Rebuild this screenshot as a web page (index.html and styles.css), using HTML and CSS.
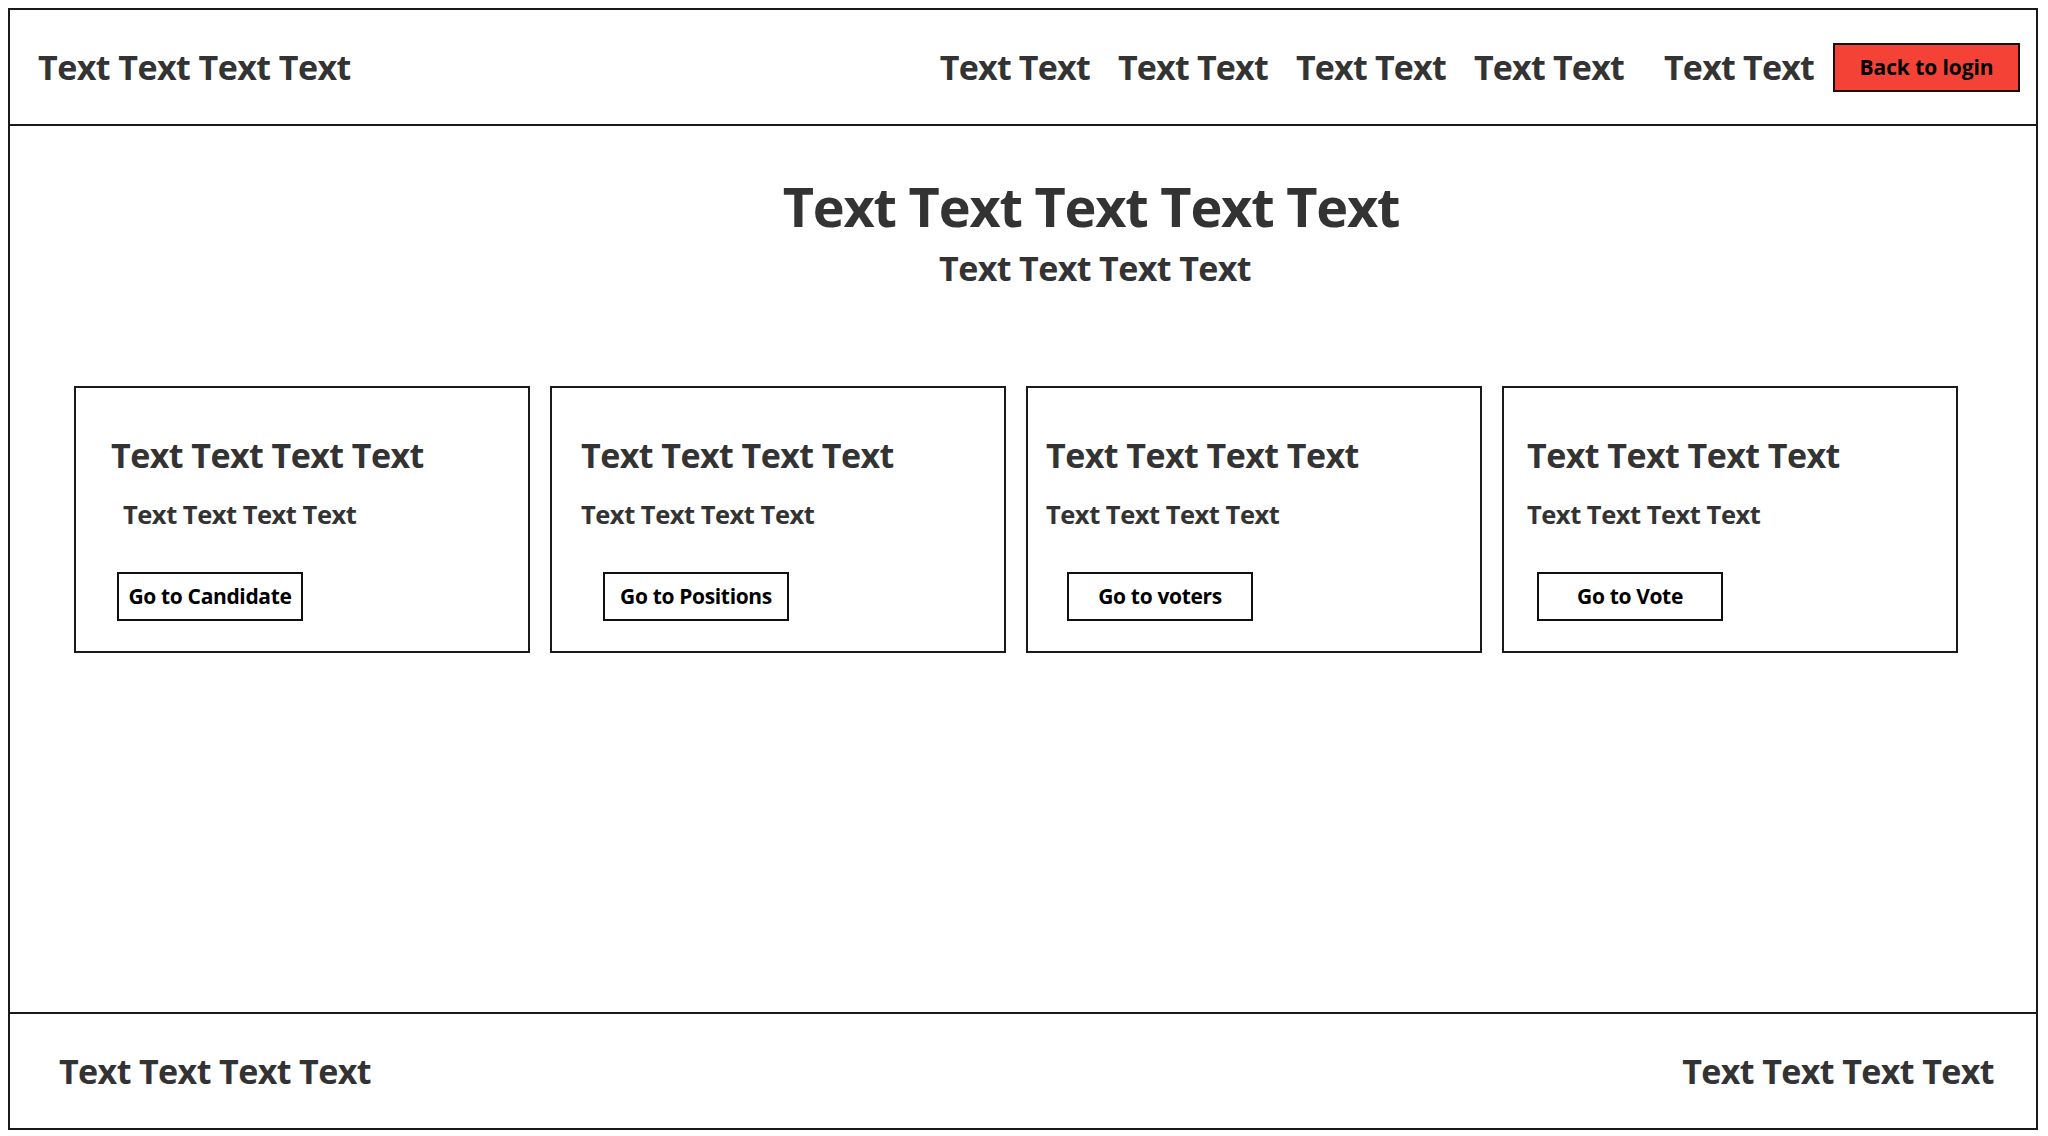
FILE: index.html
```html
<!DOCTYPE html>
<html lang="en">
<head>
<meta charset="utf-8">
<title>Dashboard</title>
<link rel="stylesheet" href="styles.css">
</head>
<body>
<div class="page">
  <header class="topbar">
    <div class="brand">Text Text Text Text</div>
    <nav class="nav">
      <a class="nav-item">Text Text</a>
      <a class="nav-item">Text Text</a>
      <a class="nav-item">Text Text</a>
      <a class="nav-item">Text Text</a>
      <a class="nav-item nav-item--spaced">Text Text</a>
      <button class="btn-logout">Back to login</button>
    </nav>
  </header>
  <main class="main">
    <section class="hero">
      <h1 class="hero-title">Text Text Text Text Text</h1>
      <p class="hero-sub">Text Text Text Text</p>
    </section>
    <section class="cards">
      <div class="card card--a">
        <h2 class="card-title">Text Text Text Text</h2>
        <p class="card-sub">Text Text Text Text</p>
        <button class="card-btn">Go to Candidate</button>
      </div>
      <div class="card card--b">
        <h2 class="card-title">Text Text Text Text</h2>
        <p class="card-sub">Text Text Text Text</p>
        <button class="card-btn">Go to Positions</button>
      </div>
      <div class="card card--c">
        <h2 class="card-title">Text Text Text Text</h2>
        <p class="card-sub">Text Text Text Text</p>
        <button class="card-btn">Go to voters</button>
      </div>
      <div class="card card--d">
        <h2 class="card-title">Text Text Text Text</h2>
        <p class="card-sub">Text Text Text Text</p>
        <button class="card-btn">Go to Vote</button>
      </div>
    </section>
  </main>
  <footer class="footer">
    <div class="footer-text">Text Text Text Text</div>
    <div class="footer-text">Text Text Text Text</div>
  </footer>
</div>
</body>
</html>
```

FILE: styles.css
```css
html, body {
  background: #ffffff;
}
body {
  margin: 8px 8px 0 8px;
  font-family: "Open Sans", "Noto Sans", sans-serif;
  font-weight: 700;
  color: #333333;
  overflow: hidden;
}
.page {
  box-sizing: border-box;
  width: 2030px;
  height: 1122px;
  border: 2px solid #1a1a1a;
  display: flex;
  flex-direction: column;
}
.topbar {
  box-sizing: border-box;
  height: 116px;
  flex: 0 0 auto;
  border-bottom: 2px solid #1a1a1a;
  display: flex;
  align-items: center;
  justify-content: space-between;
  padding: 0 16px 0 28px;
}
.brand {
  font-size: 34px;
  line-height: 1;
  letter-spacing: -0.55px;
}
.nav {
  display: flex;
  align-items: center;
  gap: 28px;
}
.nav-item {
  font-size: 34px;
  line-height: 1;
  letter-spacing: -0.8px;
  color: #333333;
  text-decoration: none;
}
.nav-item--spaced {
  margin-left: 12px;
  margin-right: -9px;
}
.btn-logout {
  box-sizing: border-box;
  width: 187px;
  height: 49px;
  background: #f44336;
  border: 2px solid #111111;
  font-family: "Open Sans", "Noto Sans", sans-serif;
  font-weight: 700;
  font-size: 21px;
  line-height: 1;
  letter-spacing: -0.1px;
  color: #000000;
  padding: 0;
}
.main {
  flex: 1 1 auto;
  display: flex;
  flex-direction: column;
}
.hero {
  padding: 53px 0 0 136px;
  display: flex;
  flex-direction: column;
  align-items: center;
}
.hero-title {
  margin: 0;
  font-size: 54px;
  line-height: 1;
  letter-spacing: -1.2px;
  font-weight: 700;
}
.hero-sub {
  margin: 18px 0 0 8px;
  font-size: 34px;
  line-height: 1;
  letter-spacing: -0.6px;
}
.cards {
  display: flex;
  gap: 20px;
  padding-left: 64px;
  margin-top: 101px;
}
.card {
  box-sizing: border-box;
  width: 456px;
  height: 267px;
  border: 2px solid #1a1a1a;
  padding-top: 50px;
  display: flex;
  flex-direction: column;
  align-items: flex-start;
}
.card-title {
  margin: 0;
  font-size: 34px;
  line-height: 1;
  letter-spacing: -0.55px;
  font-weight: 700;
}
.card-sub {
  margin: 30px 0 0 0;
  font-size: 25.5px;
  line-height: 1;
  letter-spacing: -0.48px;
}
.card-btn {
  box-sizing: border-box;
  width: 186px;
  height: 49px;
  margin-top: 44px;
  background: #ffffff;
  border: 2px solid #111111;
  font-family: "Open Sans", "Noto Sans", sans-serif;
  font-weight: 700;
  font-size: 21px;
  line-height: 1;
  letter-spacing: -0.35px;
  color: #000000;
  padding: 0;
}
.card--a { padding-left: 35px; }
.card--a .card-sub { margin-left: 12px; }
.card--a .card-btn { margin-left: 6px; }
.card--b { padding-left: 29px; }
.card--b .card-btn { margin-left: 22px; }
.card--c { padding-left: 18px; }
.card--c .card-btn { margin-left: 21px; }
.card--d { padding-left: 23px; }
.card--d .card-btn { margin-left: 10px; }
.footer {
  box-sizing: border-box;
  height: 116px;
  flex: 0 0 auto;
  border-top: 2px solid #1a1a1a;
  display: flex;
  align-items: center;
  justify-content: space-between;
  padding: 0 42px 0 49px;
}
.footer-text {
  font-size: 34px;
  line-height: 1;
  letter-spacing: -0.6px;
}
```
